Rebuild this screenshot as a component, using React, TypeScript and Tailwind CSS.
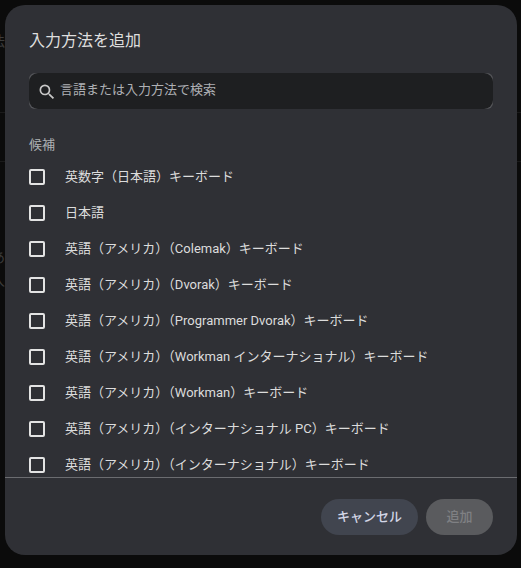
import React from "react";

const items = [
  "英数字（日本語）キーボード",
  "日本語",
  "英語（アメリカ）（Colemak）キーボード",
  "英語（アメリカ）（Dvorak）キーボード",
  "英語（アメリカ）（Programmer Dvorak）キーボード",
  "英語（アメリカ）（Workman インターナショナル）キーボード",
  "英語（アメリカ）（Workman）キーボード",
  "英語（アメリカ）（インターナショナル PC）キーボード",
  "英語（アメリカ）（インターナショナル）キーボード",
];

export default function App() {
  return (
    <div className="relative w-[521px] h-[568px] overflow-hidden bg-[#0b0b0b] pl-[5px] pt-[5px] font-['Roboto','Noto_Sans_CJK_JP',sans-serif]">
      {/* dimmed page behind the dialog */}
      <div className="absolute left-0 right-0 top-[112px] h-px bg-[#1a1a1a]" />
      <div className="absolute left-0 right-0 top-[161px] h-px bg-[#1a1a1a]" />
      <span className="absolute left-[-9px] top-[31px] text-[14px] leading-[20px] text-[#3c3c3c]">法</span>
      <span className="absolute left-[-9px] top-[247px] text-[14px] leading-[20px] text-[#3c3c3c]">あ</span>
      <span className="absolute left-[-9px] top-[270px] text-[14px] leading-[20px] text-[#3c3c3c]">入</span>

      <div className="relative w-[512px] h-[550px] rounded-[20px] bg-[#2f3035] flex flex-col overflow-hidden">
        <div className="h-[68px] shrink-0 pl-[24px] pt-[24px] text-[16px] leading-[24px] text-[#dedede]">入力方法を追加</div>
        <div className="mx-[24px] h-[36px] shrink-0 rounded-[6px] bg-[#55565a]">
          <div className="h-full rounded-[9px] bg-[#1e1f21] flex items-center pl-[8px] gap-[3px] text-[13px] text-[#aeb0b4]">
            <svg width="20" height="20" viewBox="0 0 24 24" fill="#c7c7c7" className="mt-[1px]">
              <path d="M15.5 14h-.79l-.28-.27A6.47 6.47 0 0 0 16 9.5 6.5 6.5 0 1 0 9.5 16c1.61 0 3.09-.59 4.23-1.57l.27.28v.79l5 4.99L20.49 19l-4.99-5zm-6 0C7.01 14 5 11.99 5 9.5S7.01 5 9.5 5 14 7.01 14 9.5 11.99 14 9.5 14z" />
            </svg>
            <span className="-mt-[3px]">言語または入力方法で検索</span>
          </div>
        </div>
        <div className="h-[368px] shrink-0 overflow-hidden px-[24px]">
          <div className="pt-[26px] h-[50px] text-[13px] leading-[20px] text-[#aeb0b4]">候補</div>
          {items.map((t) => (
            <div key={t} className="h-[36px] flex items-center">
              <span className="w-[16px] h-[16px] rounded-[2px] border-2 border-[#e3e3e3] shrink-0" />
              <span className="ml-[20px] text-[13px] text-[#dcdcdc] whitespace-nowrap">{t}</span>
            </div>
          ))}
        </div>
        <div className="h-px shrink-0 bg-[#6b6c70]" />
        <div className="flex justify-end gap-[8px] pt-[21px] pr-[24px]">
          <button className="w-[97px] h-[36px] rounded-full bg-[#41454f] text-[13px] font-medium text-[#d3d6e6]">キャンセル</button>
          <button className="w-[67px] h-[36px] rounded-full bg-[#5a5b5e] text-[13px] font-medium text-[#7f8083]">追加</button>
        </div>
      </div>
    </div>
  );
}
